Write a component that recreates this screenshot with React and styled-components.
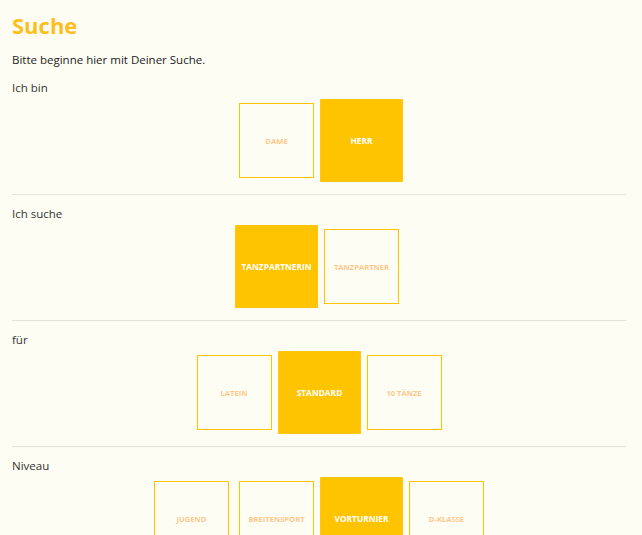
import React, {useState} from "react"
import styled, {createGlobalStyle} from "styled-components"

const colors = {
  bg: "#fefdf4",
  yellow: "#ffc400",
  title: "#fcbf1e",
  peach: "#fdc88c",
  rule: "#e4e3da",
  text: "#222"
}

const GlobalStyle = createGlobalStyle`
  body {
    margin: 0;
    background: ${colors.bg};
    font-family: "Open Sans", "Liberation Sans", sans-serif;
    color: ${colors.text};
  }
`

const SPage = styled.div`
  padding: 11px 16px 0 12px;
  min-height: 535px;
  box-sizing: border-box;
  overflow: hidden;
`

const STitle = styled.h1`
  margin: 0;
  font-size: 22px;
  line-height: 28px;
  font-weight: 700;
  color: ${colors.title};
`

const SIntro = styled.p`
  margin: 13px 0 0;
  font-size: 11.5px;
  line-height: 16px;
`

const SSection = styled.section`
  padding-bottom: 16px;
  border-bottom: 1px solid ${colors.rule};
  margin-bottom: 11px;

  &:last-child {
    border-bottom: none;
  }
`

const SLabel = styled.div`
  font-size: 11.5px;
  line-height: 16px;
  font-weight: 400;
  color: #333;
  margin-top: ${p => (p.first ? "12px" : "0")};
`

const SOptions = styled.div`
  display: flex;
  justify-content: center;
  gap: 10px;
  margin-top: 7px;
`

const SOption = styled.button`
  width: 75px;
  height: 75px;
  box-sizing: border-box;
  padding: 0;
  display: flex;
  align-items: center;
  justify-content: center;
  font-family: inherit;
  font-size: 7.6px;
  font-weight: 700;
  text-transform: uppercase;
  cursor: pointer;
  border: 1px solid ${colors.yellow};
  background: ${p => (p.active ? colors.yellow : "transparent")};
  color: ${p => (p.active ? "#fff" : colors.peach)};
  transform: ${p => (p.active ? "scale(1.1)" : "none")};
`

const sections = [
  {label: "Ich bin", options: ["Dame", "Herr"], active: 1},
  {label: "Ich suche", options: ["Tanzpartnerin", "Tanzpartner"], active: 0},
  {label: "für", options: ["Latein", "Standard", "10 Tänze"], active: 1},
  {label: "Niveau", options: ["Jugend", "Breitensport", "Vorturnier", "D-Klasse"], active: 2}
]

const Section = ({label, options, active, first}) => {
  const [selected, setSelected] = useState(active)
  return (
    <SSection>
      <SLabel first={first}>{label}</SLabel>
      <SOptions>
        {options.map((o, i) => (
          <SOption key={o} active={i === selected} onClick={() => setSelected(i)}>
            {o}
          </SOption>
        ))}
      </SOptions>
    </SSection>
  )
}

const App = () => (
  <SPage>
    <GlobalStyle />
    <STitle>Suche</STitle>
    <SIntro>Bitte beginne hier mit Deiner Suche.</SIntro>
    {sections.map((s, i) => (
      <Section key={s.label} {...s} first={i === 0} />
    ))}
  </SPage>
)

export default App
